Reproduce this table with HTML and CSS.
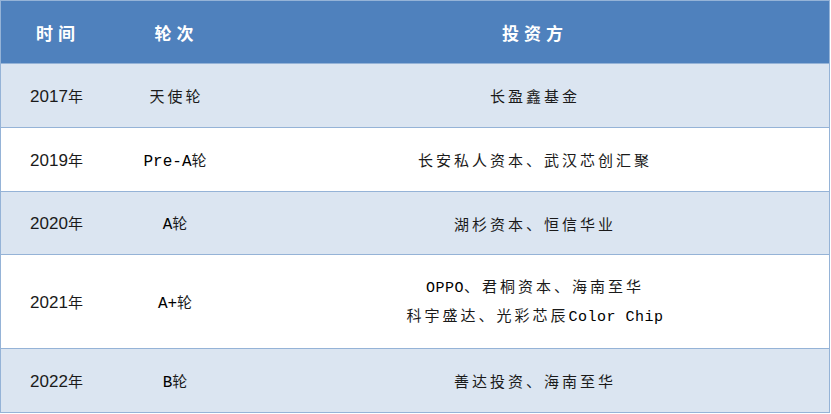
FILE: index.html
```html
<!DOCTYPE html>
<html lang="zh">
<head>
<meta charset="utf-8">
<title>融资历程</title>
<link rel="stylesheet" href="styles.css">
</head>
<body>
<div class="table">
  <div class="row head">
    <div class="cell">时间</div>
    <div class="cell">轮次</div>
    <div class="cell">投资方</div>
  </div>
  <div class="row alt r63">
    <div class="cell year"><span class="num">2017</span>年</div>
    <div class="cell">天使轮</div>
    <div class="cell">长盈鑫基金</div>
  </div>
  <div class="row r63">
    <div class="cell year"><span class="num">2019</span>年</div>
    <div class="cell"><span class="lat round">Pre-A</span>轮</div>
    <div class="cell">长安私人资本、武汉芯创汇聚</div>
  </div>
  <div class="row alt r62">
    <div class="cell year"><span class="num">2020</span>年</div>
    <div class="cell"><span class="lat round">A</span>轮</div>
    <div class="cell">湖杉资本、恒信华业</div>
  </div>
  <div class="row r93">
    <div class="cell year"><span class="num">2021</span>年</div>
    <div class="cell"><span class="lat round">A+</span>轮</div>
    <div class="cell multi">
      <div><span class="lat">OPPO</span>、君桐资本、海南至华</div>
      <div>科宇盛达、光彩芯辰<span class="lat">Color Chip</span></div>
    </div>
  </div>
  <div class="row alt r63">
    <div class="cell year"><span class="num">2022</span>年</div>
    <div class="cell"><span class="lat round">B</span>轮</div>
    <div class="cell">善达投资、海南至华</div>
  </div>
</div>
</body>
</html>
```
FILE: styles.css
```css
* { box-sizing: border-box; }
html, body { margin: 0; padding: 0; background: #ffffff; }
body {
  font-family: "Noto Sans CJK SC", sans-serif;
  color: #1a1a1a;
}
.table {
  width: 830px;
  border: 1px solid #95b3d7;
  background: #ffffff;
}
.row {
  display: grid;
  grid-template-columns: 111px 126px 1fr;
  align-items: center;
  border-top: 1px solid #95b3d7;
  font-size: 15px;
  letter-spacing: 3px;
}
.row.head {
  border-top: none;
  height: 62px;
  background: #4f81bd;
  color: #ffffff;
  font-size: 17px;
  font-weight: 700;
  letter-spacing: 5px;
}
.row.head .cell { padding-left: 3px; }
.row.alt { background: #dbe5f1; }
.r63 { height: 64px; }
.r62 { height: 63px; }
.r93 { height: 94px; }
.cell {
  text-align: center;
  padding-left: 3px;
  white-space: nowrap;
}
.year {
  letter-spacing: 0;
  padding-left: 0;
}
.num {
  font-family: "Liberation Sans", "Noto Sans", sans-serif;
  font-size: 17px;
}
.lat {
  font-family: "Liberation Mono", monospace;
  letter-spacing: 0.5px;
  color: #000000;
}
.lat.round {
  font-size: 16px;
  letter-spacing: 0;
}
.multi {
  line-height: 26px;
}
```
